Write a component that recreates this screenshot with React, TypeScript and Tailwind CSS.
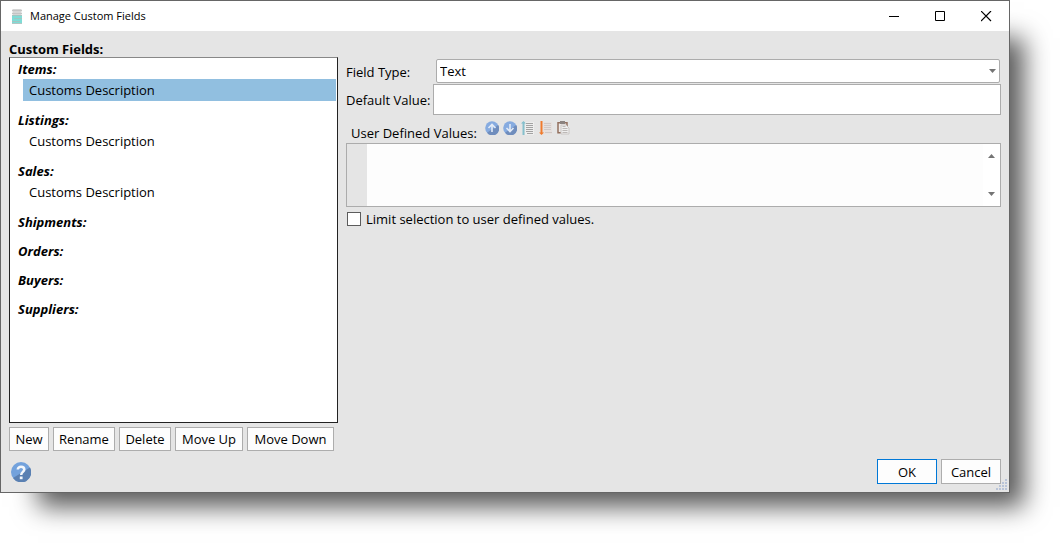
import React from "react";

type Group = { name: string; fields: string[] };

const groups: Group[] = [
  { name: "Items", fields: ["Customs Description"] },
  { name: "Listings", fields: ["Customs Description"] },
  { name: "Sales", fields: ["Customs Description"] },
  { name: "Shipments", fields: [] },
  { name: "Orders", fields: [] },
  { name: "Buyers", fields: [] },
  { name: "Suppliers", fields: [] },
];

function JarIcon() {
  return (
    <svg width="10" height="15" viewBox="0 0 10 15" aria-hidden="true">
      <rect x="0.5" width="9" height="6" fill="#d6d6d6" />
      <path d="M0 1.500h10M0 4.500h10" stroke="#c4c4c4" />
      <rect y="6" width="10" height="9" fill="#7fdcd6" />
      <path d="M0 6.500h10M2 9.500h8M0 12.500h8" stroke="#a3c4c1" />
      <path d="M0 14.500h10" stroke="#b4c6c4" />
    </svg>
  );
}

function ArrowCircle({ down = false }: { down?: boolean }) {
  return (
    <svg width="14" height="14" viewBox="0 0 14 14" aria-hidden="true">
      <circle cx="7" cy="7" r="6.800" fill="#86abe0" />
      <path d="M13.200 4A6.800 6.800 0 0 1 2 11.700Z" fill="#6f8dbd" />
      <path
        d={down ? "M7 3v7M3.500 7L7 10.500L10.500 7" : "M7 11V4M3.500 7L7 3.500L10.500 7"}
        fill="none"
        stroke="#e3ebf7"
        strokeWidth="1.600"
      />
    </svg>
  );
}

function SortUpIcon() {
  return (
    <svg width="14" height="14" viewBox="0 0 14 14" aria-hidden="true">
      <rect x="4" y="1" width="9" height="13" fill="#eeeeee" />
      <path d="M5 2.500h7M5 4.500h7M5 6.500h7M5 8.500h7M5 10.500h7M6 12.500h6" stroke="#a2a2a2" />
      <path d="M2.500 1v13" stroke="#86c0cd" strokeWidth="2" />
      <path d="M0 2.500L2.500 0L5 2.500Z" fill="#86c0cd" />
    </svg>
  );
}

function SortDownIcon() {
  return (
    <svg width="14" height="14" viewBox="0 0 14 14" aria-hidden="true">
      <rect x="4" y="1" width="9" height="12" fill="#e6e0de" />
      <path d="M5 2.500h7M5 4.500h7M5 6.500h7M5 8.500h7M6 11.500h7" stroke="#cfc8c6" />
      <path d="M2.500 0v12" stroke="#f07a2c" strokeWidth="2" />
      <path d="M0 11.500h5L2.500 14Z" fill="#f07a2c" />
    </svg>
  );
}

function PasteIcon() {
  return (
    <svg width="14" height="14" viewBox="0 0 14 14" aria-hidden="true">
      <path d="M1 1.700h9v10H1Z" fill="#eeeae8" stroke="#93705f" strokeWidth="1.500" />
      <rect x="3" y="0" width="5" height="3" fill="#8a827f" />
      <path d="M4 4h5l3 3v6H4Z" fill="#efefef" stroke="#cbc7c5" />
      <path d="M5.500 5.500h3M5.500 7.500h5M5.500 9.500h5M5.500 11.500h5" stroke="#bdb9b7" />
    </svg>
  );
}

function HelpIcon() {
  return (
    <svg width="20" height="20" viewBox="0 0 20 20" aria-hidden="true">
      <circle cx="10" cy="10" r="10" fill="#73a2dc" />
      <path d="M19 5.500A10 10 0 0 1 2 16Z" fill="#5a80b2" />
      <path
        d="M6.800 7.500C6.800 3.800 13.300 3.900 13.300 7.600C13.300 10 10.200 9.900 10.200 13"
        fill="none"
        stroke="#f4f7fb"
        strokeWidth="2.500"
      />
      <rect x="8.800" y="14.500" width="2.800" height="2.700" fill="#f4f7fb" />
    </svg>
  );
}

function Triangle({ up = false }: { up?: boolean }) {
  return (
    <svg width="7" height="4" viewBox="0 0 7 4" aria-hidden="true">
      <path d={up ? "M0 4L3.500 0L7 4Z" : "M0 0L3.500 4L7 0Z"} fill="#747474" />
    </svg>
  );
}

function ToolButton({ label, children }: { label: string; children: React.ReactNode }) {
  return (
    <button type="button" aria-label={label} className="size-[14px]">
      {children}
    </button>
  );
}

function PushButton({ children, className }: { children: React.ReactNode; className: string }) {
  return (
    <button type="button" className={"whitespace-nowrap border bg-[#fdfdfd] " + className}>
      {children}
    </button>
  );
}

function TitleBar() {
  return (
    <header className="flex h-[30px] items-center bg-white pl-[11px] pr-[17px]">
      <JarIcon />
      <h1 className="ml-2 flex-1 text-[11px]">Manage Custom Fields</h1>
      <div className="flex gap-[35px]">
        <button type="button" aria-label="Minimize">
          <svg width="11" height="11" viewBox="0 0 11 11">
            <path d="M0 5.500h10" stroke="#000" />
          </svg>
        </button>
        <button type="button" aria-label="Maximize">
          <svg width="11" height="11" viewBox="0 0 11 11">
            <path d="M0.500 0.500h9v9h-9Z" fill="none" stroke="#000" />
          </svg>
        </button>
        <button type="button" aria-label="Close">
          <svg width="11" height="11" viewBox="0 0 11 11">
            <path d="M0 0l10 10M10 0l-10 10" stroke="#000" strokeWidth="1.200" />
          </svg>
        </button>
      </div>
    </header>
  );
}

function FieldList() {
  return (
    <section className="flex w-[329px] shrink-0 flex-col">
      <h2 className="h-[18px] font-bold leading-5">Custom Fields:</h2>
      <div className="flex flex-1 flex-col gap-[9px] border border-[#222] border-t-[#888] bg-white py-px pl-2 pr-px">
        {groups.map((group, index) => (
          <div key={group.name}>
            <h3 className="font-bold italic leading-5">{group.name}:</h3>
            {group.fields.map((field) => (
              <button
                key={field}
                type="button"
                className={
                  index === 0
                    ? "ml-[5px] block h-[22px] w-[313px] bg-[#91bfe0] pl-[6px] text-left"
                    : "ml-[5px] block h-[22px] w-[313px] pl-[6px] text-left"
                }
              >
                {field}
              </button>
            ))}
          </div>
        ))}
      </div>
      <div className="mt-1 flex gap-1">
        <PushButton className="h-6 w-10 border-[#adadad]">New</PushButton>
        <PushButton className="h-6 w-[62px] border-[#adadad]">Rename</PushButton>
        <PushButton className="h-6 w-[52px] border-[#adadad]">Delete</PushButton>
        <PushButton className="h-6 w-[68px] border-[#adadad]">Move Up</PushButton>
        <PushButton className="h-6 w-[87px] border-[#adadad]">Move Down</PushButton>
      </div>
    </section>
  );
}

function FieldEditor() {
  return (
    <section className="min-w-0 flex-1 pt-5">
      <div className="flex items-center pr-px">
        <label htmlFor="type" className="w-[90px] pt-[2px]">
          Field Type:
        </label>
        <div className="relative flex-1">
          <select
            id="type"
            className="block h-6 w-full appearance-none rounded-[2px] border border-[#acacac] bg-white pl-[3px]"
          >
            <option>Text</option>
          </select>
          <span className="pointer-events-none absolute right-1 top-[10px]">
            <Triangle />
          </span>
        </div>
      </div>
      <div className="mt-px flex items-center">
        <label htmlFor="default" className="w-[87px] whitespace-nowrap">
          Default Value:
        </label>
        <input
          id="default"
          type="text"
          className="h-[31px] min-w-0 flex-1 border border-[#acacac] bg-white px-1"
        />
      </div>
      <div className="flex h-7 pl-[5px]">
        <label htmlFor="values" className="w-[134px] whitespace-nowrap pt-2 leading-5">
          User Defined Values:
        </label>
        <div className="flex gap-1 pt-[6px]">
          <ToolButton label="Move value up"><ArrowCircle /></ToolButton>
          <ToolButton label="Move value down"><ArrowCircle down /></ToolButton>
          <ToolButton label="Sort ascending"><SortUpIcon /></ToolButton>
          <ToolButton label="Sort descending"><SortDownIcon /></ToolButton>
          <ToolButton label="Paste"><PasteIcon /></ToolButton>
        </div>
      </div>
      <div className="flex h-16 border border-[#acacac] bg-[#fdfdfd]">
        <div className="w-5 bg-[#e5e5e5]" />
        <textarea id="values" className="h-full min-w-0 flex-1 resize-none px-1 outline-none" />
        <div className="flex w-[17px] flex-col items-center justify-between bg-white py-[10px]">
          <Triangle up />
          <Triangle />
        </div>
      </div>
      <label className="mt-[2px] flex h-5 items-center gap-[5px] pl-px">
        <input
          type="checkbox"
          className="size-[14px] appearance-none border border-[#5c5c5c] bg-white checked:bg-[#0078d7]"
        />
        Limit selection to user defined values.
      </label>
    </section>
  );
}

function ResizeGrip() {
  return (
    <svg className="absolute bottom-px right-px" width="12" height="12" viewBox="0 0 12 12" aria-hidden="true">
      <path
        d="M9 0h2v2h-2zM9 3h2v2h-2zM6 3h2v2h-2zM9 6h2v2h-2zM6 6h2v2h-2zM3 6h2v2h-2zM9 9h2v2h-2zM6 9h2v2h-2zM3 9h2v2h-2zM0 9h2v2h-2z"
        fill="#b9c4d8"
      />
    </svg>
  );
}

export default function App() {
  return (
    <div className="flex min-h-screen flex-col overflow-hidden bg-white pb-[50px] pr-[50px] font-['Open_Sans','Noto_Sans',sans-serif] text-[13px] leading-5 text-black">
      <main className="relative flex flex-1 flex-col border border-[#666] bg-[#e5e5e5] shadow-[26px_26px_24px_-12px_rgba(0,0,0,0.65)]">
        <TitleBar />
        <div className="flex flex-1 gap-2 pl-2 pr-2 pt-2">
          <FieldList />
          <FieldEditor />
        </div>
        <footer className="flex items-center gap-1 pb-2 pl-[10px] pr-2 pt-2">
          <button type="button" aria-label="Help" className="mr-auto">
            <HelpIcon />
          </button>
          <PushButton className="h-[25px] w-[60px] border-[#0078d7]">OK</PushButton>
          <PushButton className="h-[25px] w-[60px] border-[#adadad]">Cancel</PushButton>
        </footer>
        <ResizeGrip />
      </main>
    </div>
  );
}
